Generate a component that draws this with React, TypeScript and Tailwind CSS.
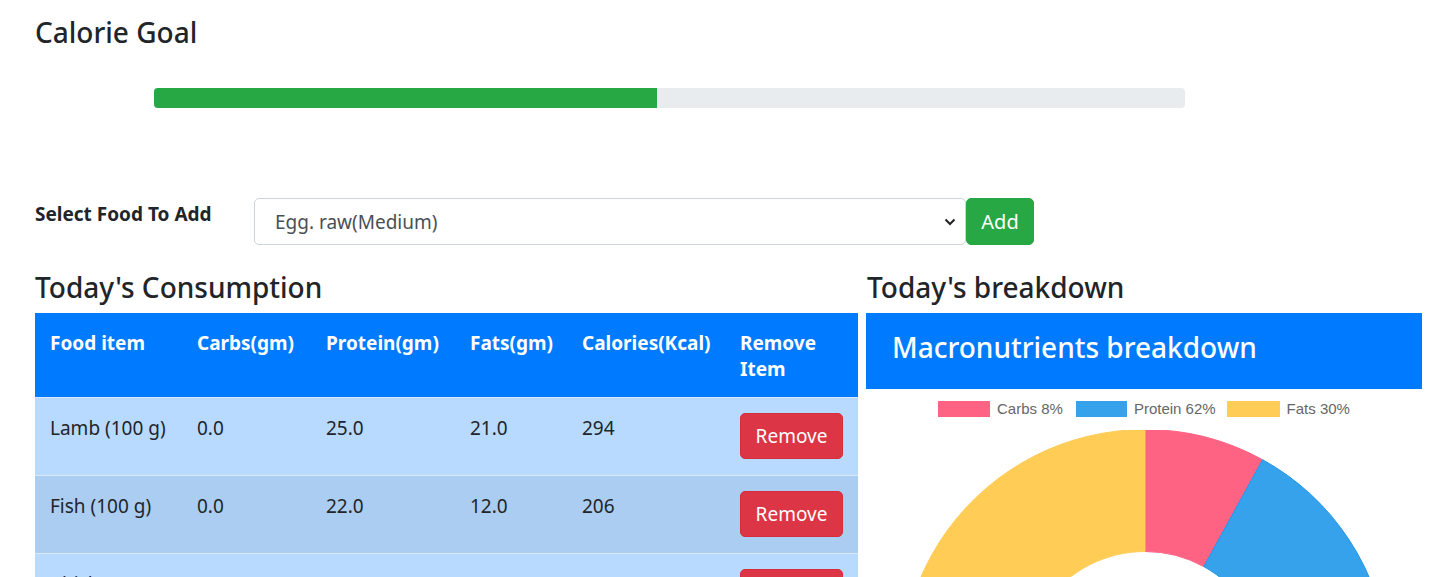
import React from "react";

const font = { fontFamily: '"Noto Sans", "Open Sans", sans-serif' };

function pt(cx: number, cy: number, r: number, deg: number) {
  const a = (deg * Math.PI) / 180;
  return [cx + r * Math.sin(a), cy - r * Math.cos(a)];
}

function arc(cx: number, cy: number, R: number, r: number, a0: number, a1: number) {
  const [x0, y0] = pt(cx, cy, R, a0);
  const [x1, y1] = pt(cx, cy, R, a1);
  const [x2, y2] = pt(cx, cy, r, a1);
  const [x3, y3] = pt(cx, cy, r, a0);
  const large = a1 - a0 > 180 ? 1 : 0;
  return `M${x0} ${y0} A${R} ${R} 0 ${large} 1 ${x1} ${y1} L${x2} ${y2} A${r} ${r} 0 ${large} 0 ${x3} ${y3} Z`;
}

const rows = [
  { name: "Lamb (100 g)", c: "0.0", p: "25.0", f: "21.0", k: "294", bg: "bg-[#b8daff]" },
  { name: "Fish (100 g)", c: "0.0", p: "22.0", f: "12.0", k: "206", bg: "bg-[#abcdf1]" },
  { name: "Chicken (100 g)", c: "0.0", p: "31.0", f: "3.6", k: "165", bg: "bg-[#b8daff]" },
];

export default function App() {
  const cx = 279;
  const cy = 243.5;
  const R = 244;
  const r = 122;
  return (
    <div className="w-[1447px] h-[577px] overflow-hidden bg-white text-[#212529]" style={font}>
      <div className="pl-[35px] pt-[13px]">
        <h3 className="text-[28px] leading-[38px] font-medium">Calorie Goal</h3>
        <div className="ml-[119px] mt-[37px] w-[1031px] h-[20px] rounded-[4px] bg-[#e9ecef] overflow-hidden flex">
          <div className="w-[503px] h-full bg-[#28a745]" />
        </div>
        <div className="mt-[90px] flex items-start">
          <div className="w-[219px] pt-[3px] text-[19px] leading-[26px] font-bold">Select Food To Add</div>
          <div className="flex">
            <div className="w-[712px] h-[47px] border border-[#ced4da] rounded-[5px] flex items-center justify-between pl-[20px] pr-[9px] text-[19px] text-[#495057]">
              <span className="pt-[1px]">Egg. raw(Medium)</span>
              <svg width="12" height="8" viewBox="0 0 12 8">
                <path d="M1.5 1.5 L6 6 L10.5 1.5" fill="none" stroke="#222" strokeWidth="2" />
              </svg>
            </div>
            <button className="w-[68px] h-[47px] bg-[#28a745] text-white text-[20px] rounded-[5px] border border-[#28a745]">
              Add
            </button>
          </div>
        </div>
        <div className="mt-[23px] flex gap-[8px]">
          <div className="w-[823px]">
            <h3 className="text-[28px] leading-[38px] font-medium mb-[7px]">Today's Consumption</h3>
            <table className="w-[823px] table-fixed border-collapse text-[19px] leading-[26px]">
              <colgroup>
                <col className="w-[147px]" />
                <col className="w-[129px]" />
                <col className="w-[144px]" />
                <col className="w-[112px]" />
                <col className="w-[158px]" />
                <col className="w-[133px]" />
              </colgroup>
              <thead>
                <tr className="bg-[#007bff] text-white font-bold text-left">
                  <th className="px-[15px] pt-[17px] pb-[15px] align-top">Food item</th>
                  <th className="px-[15px] pt-[17px] pb-[15px] align-top">Carbs(gm)</th>
                  <th className="px-[15px] pt-[17px] pb-[15px] align-top">Protein(gm)</th>
                  <th className="px-[15px] pt-[17px] pb-[15px] align-top">Fats(gm)</th>
                  <th className="px-[15px] pt-[17px] pb-[15px] align-top">Calories(Kcal)</th>
                  <th className="px-[15px] pt-[17px] pb-[15px] align-top">Remove Item</th>
                </tr>
              </thead>
              <tbody>
                {rows.map((row, i) => (
                  <tr key={i} className={`${row.bg} border-t border-[#d9e9fb]`}>
                    <td className="px-[15px] pt-[17px] pb-[16px] align-top">{row.name}</td>
                    <td className="px-[15px] pt-[17px] pb-[16px] align-top">{row.c}</td>
                    <td className="px-[15px] pt-[17px] pb-[16px] align-top">{row.p}</td>
                    <td className="px-[15px] pt-[17px] pb-[16px] align-top">{row.f}</td>
                    <td className="px-[15px] pt-[17px] pb-[16px] align-top">{row.k}</td>
                    <td className="px-[15px] pt-[15px] pb-[16px] align-top">
                      <button className="w-[103px] h-[46px] rounded-[5px] bg-[#dc3545] text-white text-[19px] border border-[#d52d3e]">
                        Remove
                      </button>
                    </td>
                  </tr>
                ))}
              </tbody>
            </table>
          </div>
          <div className="w-[556px]">
            <h3 className="text-[28px] leading-[38px] font-medium mb-[7px] pl-[1px]">Today's breakdown</h3>
            <div className="h-[76px] bg-[#007bff] text-white text-[28px] font-medium flex items-center pl-[26px] pb-[8px]">
              Macronutrients breakdown
            </div>
            <div
              className="mt-[9px] flex justify-center items-center text-[15px] text-[#666]"
              style={{ fontFamily: '"Liberation Sans", Arial, sans-serif' }}
            >
              <span className="w-[52px] h-[16px] bg-[#ff6384] border border-[#ff6384]" />
              <span className="ml-[7px] mr-[13px]">Carbs 8%</span>
              <span className="w-[51px] h-[16px] bg-[#36a2eb] border border-[#36a2eb]" />
              <span className="ml-[7px] mr-[11px]">Protein 62%</span>
              <span className="w-[53px] h-[16px] bg-[#ffcd56] border border-[#ffcd56]" />
              <span className="ml-[7px]">Fats 30%</span>
            </div>
            <svg width="556" height="500" viewBox="0 0 556 500" className="block mt-[9px]">
              <path d={arc(cx, cy, R, r, 0, 28.8)} fill="#ff6384" stroke="#ff6384" strokeWidth="1" />
              <path d={arc(cx, cy, R, r, 28.8, 252)} fill="#36a2eb" stroke="#2196e8" strokeWidth="1" />
              <path d={arc(cx, cy, R, r, 252, 360)} fill="#ffcd56" stroke="#ffcd56" strokeWidth="1" />
            </svg>
          </div>
        </div>
      </div>
    </div>
  );
}
